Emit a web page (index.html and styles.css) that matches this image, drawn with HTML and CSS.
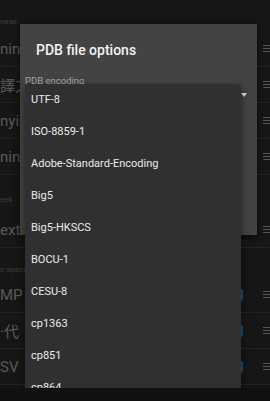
FILE: index.html
```html
<!DOCTYPE html>
<html lang="en">
<head>
    <meta charset="UTF-8">
    <meta name="viewport" content="width=device-width, initial-scale=1.0">
    <title>PDB file options</title>
    <link rel="stylesheet" href="styles.css">
</head>
<body>
    <div id="dict-list">
        <div class="section-head">nese</div>
        <div class="dict-row"><span class="dict-name">nine</span><span class="grip"></span></div>
        <div class="dict-row"><span class="dict-name">譯之</span><span class="grip"></span></div>
        <div class="dict-row"><span class="dict-name">nyin</span><span class="grip"></span></div>
        <div class="dict-row"><span class="dict-name">nine</span><span class="grip"></span></div>
        <div class="section-head tall">eek</div>
        <div class="dict-row"><span class="dict-name">extu</span><span class="grip"></span></div>
        <div class="section-head short">c speci</div>
        <div class="dict-row"><span class="dict-name">MP</span><span class="check"></span><span class="grip"></span></div>
        <div class="dict-row"><span class="dict-name">·代</span><span class="check"></span><span class="grip"></span></div>
        <div class="dict-row"><span class="dict-name">SV</span><span class="check"></span><span class="grip"></span></div>
    </div>

    <div class="dialog">
        <h2 class="dialog-title">PDB file options</h2>
        <label class="field-label">PDB encoding</label>
        <div class="spinner">
            <span class="spinner-arrow"></span>
        </div>
    </div>

    <ul class="dropdown">
        <li>UTF-8</li>
        <li>ISO-8859-1</li>
        <li>Adobe-Standard-Encoding</li>
        <li>Big5</li>
        <li>Big5-HKSCS</li>
        <li>BOCU-1</li>
        <li>CESU-8</li>
        <li>cp1363</li>
        <li>cp851</li>
        <li>cp864</li>
    </ul>

    <div class="nav-bar"></div>
</body>
</html>
```

FILE: styles.css
```css
html, body {
    margin: 0;
    padding: 0;
    height: 401px;
    overflow: hidden;
}
body {
    font-family: Roboto, "Noto Sans CJK SC", sans-serif;
    background: #161616;
    position: relative;
}
#dict-list {
    display: flex;
    flex-direction: column;
}
.section-head {
    height: 31px;
    box-sizing: border-box;
    display: flex;
    align-items: flex-end;
    padding: 0 0 5px 0;
    font-size: 8px;
    color: #3e3e3e;
}
.section-head.tall {
    height: 37px;
    padding-bottom: 8px;
}
.section-head.short {
    height: 29px;
    padding-bottom: 3px;
}
.dict-row {
    height: 36px;
    box-sizing: border-box;
    display: flex;
    align-items: center;
    border-bottom: 1px solid #222;
}
.dict-name {
    flex: 1;
    font-size: 15px;
    color: #5a5a5a;
    white-space: nowrap;
    overflow: hidden;
}
.check {
    width: 12px;
    height: 12px;
    border-radius: 2px;
    background: #1b4e77;
    margin-right: 20px;
}
.grip {
    width: 7px;
    height: 7px;
    border-top: 1px solid #555;
    border-bottom: 1px solid #555;
    box-sizing: border-box;
    position: relative;
}
.grip::after {
    content: "";
    position: absolute;
    left: 0;
    right: 0;
    top: 2px;
    border-top: 1px solid #555;
}

.dialog {
    position: absolute;
    left: 20px;
    top: 24px;
    width: 237px;
    height: 211px;
    background: #434343;
    box-shadow: 0 2px 6px rgba(0, 0, 0, 0.6);
    border-radius: 1px;
}
.dialog-title {
    margin: 0;
    padding: 17px 0 0 16px;
    font-size: 14px;
    font-weight: 500;
    color: #f2f2f2;
    line-height: 18px;
}
.field-label {
    display: block;
    margin: 16px 0 0 5px;
    font-size: 9.5px;
    color: #a8a8a8;
    line-height: 12px;
}
.spinner {
    position: relative;
    height: 18px;
    margin: 0 10px 0 5px;
}
.spinner-arrow {
    position: absolute;
    right: 0;
    top: 6px;
    width: 0;
    height: 0;
    border-left: 3px solid transparent;
    border-right: 3px solid transparent;
    border-top: 4px solid #e0e0e0;
}

.dropdown {
    position: absolute;
    left: 25px;
    top: 84px;
    width: 216px;
    margin: 0;
    padding: 0;
    list-style: none;
    background: #303030;
    box-shadow: 0 3px 8px rgba(0, 0, 0, 0.5);
}
.dropdown li {
    height: 32px;
    line-height: 32px;
    padding-left: 6px;
    font-size: 11px;
    color: #ececec;
}
.nav-bar {
    position: absolute;
    left: 0;
    right: 0;
    bottom: 0;
    height: 13px;
    background: #111;
}
```
